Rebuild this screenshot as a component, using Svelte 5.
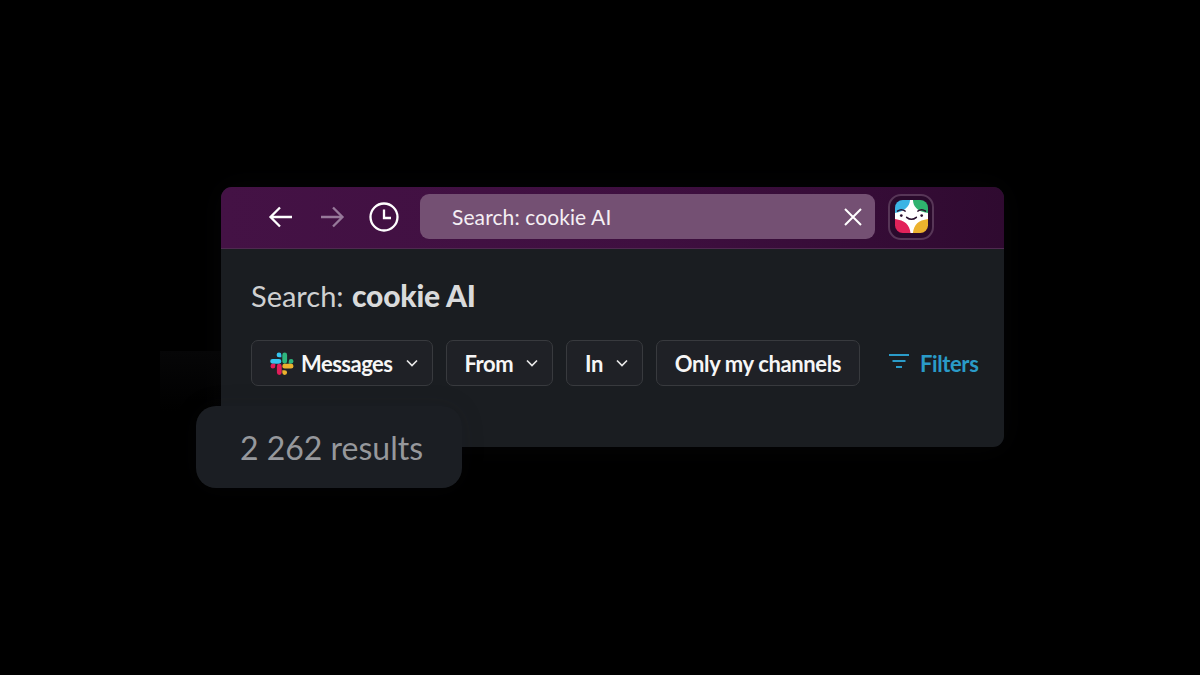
<script>
  const chips = [
    { label: 'Messages', logo: true, chevron: true },
    { label: 'From', chevron: true },
    { label: 'In', chevron: true },
    { label: 'Only my channels' }
  ];
</script>

<main class="page">
  <section class="window">
    <div class="ghost"></div>
    <header class="topbar">
      <svg class="nav back" viewBox="0 0 26 26" aria-hidden="true"><path d="M24 13H2.5M12 3.5 2.5 13l9.500 9.500" /></svg>
      <svg class="nav forward" viewBox="0 0 26 26" aria-hidden="true"><path d="M2 13h21.500M14 3.500l9.500 9.500-9.500 9.500" /></svg>
      <svg class="clock" viewBox="0 0 30 30" aria-hidden="true"><circle cx="15" cy="15" r="13.500" /><path d="M15 7.500V16h7" /></svg>
      <div class="search">
        <span>Search: cookie AI</span>
        <svg class="close" viewBox="0 0 20 20" aria-hidden="true"><path d="M2 2l16 16M18 2 2 18" /></svg>
      </div>
      <div class="avatar">
        <svg viewBox="0 0 34 34" aria-hidden="true">
          <defs><clipPath id="sq"><rect width="34" height="34" rx="8" /></clipPath></defs>
          <g clip-path="url(#sq)">
            <rect width="17" height="17" fill="#3bb4e5" />
            <rect x="17" width="17" height="17" fill="#2fb36f" />
            <rect y="17" width="17" height="17" fill="#e2225a" />
            <rect x="17" y="17" width="17" height="17" fill="#ecb22e" />
            <path d="M15.500 0h3c.5 7 4 11.500 15.500 13.500V19.500C24 21 19.500 25 18.500 34h-2.500C15 25 10 21 0 19.500V13.500C10 11.500 15 7 15.500 0Z" fill="#fff" />
            <path d="M2.500 11.500c2.500-1.800 5.500-1.800 8 0M23.500 11.500c2.500-1.800 5.500-1.800 8 0" fill="none" stroke="#2b1230" stroke-width="1.400" stroke-linecap="round" />
            <path d="M12 17.800c3.200 2.600 6.800 2.600 10 0" fill="none" stroke="#2b1230" stroke-width="1.600" stroke-linecap="round" />
            <circle cx="6.500" cy="16" r="1.400" fill="#2b1230" />
            <circle cx="27.500" cy="16" r="1.400" fill="#2b1230" />
          </g>
        </svg>
      </div>
    </header>

    <div class="content">
      <h1>Search: <strong>cookie AI</strong></h1>
      <div class="filters">
        {#each chips as chip}
          <button class="chip" class:plain={!chip.chevron}>
            {#if chip.logo}
              <svg class="slack" viewBox="0 0 24 24" aria-hidden="true">
                <path fill="#36c5f0" d="M9 1a2.400 2.400 0 0 0 0 4.800h2.400V3.400A2.400 2.400 0 0 0 9 1ZM9 7.400H2.600a2.400 2.400 0 0 0 0 4.800H9a2.400 2.400 0 0 0 0-4.800Z" />
                <path fill="#2eb67d" d="M23.500 9.800a2.400 2.400 0 0 0-4.800 0v2.400h2.400a2.400 2.400 0 0 0 2.400-2.400ZM17.100 9.800V3.400a2.400 2.400 0 0 0-4.800 0v6.400a2.400 2.400 0 0 0 4.800 0Z" />
                <path fill="#ecb22e" d="M14.700 23.500a2.400 2.400 0 0 0 0-4.800h-2.400v2.400a2.400 2.400 0 0 0 2.400 2.400ZM14.700 17.100h6.400a2.400 2.400 0 0 0 0-4.800h-6.400a2.400 2.400 0 0 0 0 4.800Z" />
                <path fill="#e01e5a" d="M.5 14.700a2.400 2.400 0 0 0 4.800 0v-2.400H2.900a2.400 2.400 0 0 0-2.400 2.400ZM6.900 14.700v6.400a2.400 2.400 0 0 0 4.800 0v-6.400a2.400 2.400 0 0 0-4.800 0Z" />
              </svg>
            {/if}
            <span>{chip.label}</span>
            {#if chip.chevron}
              <svg class="chev" viewBox="0 0 12 8" aria-hidden="true"><path d="M1 1.500 6 6.500l5-5" /></svg>
            {/if}
          </button>
        {/each}
        <div class="more">
          <svg viewBox="0 0 22 16" aria-hidden="true"><path d="M1 2h20M4.500 8h13M8 14h6" /></svg>
          <span>Filters</span>
        </div>
      </div>
    </div>
    <div class="results">2 262 results</div>
  </section>
</main>

<style>
  :global(body) { margin: 0; background: #000; }
  .page {
    width: 1200px;
    height: 675px;
    padding: 187px 196px 0 221px;
    box-sizing: border-box;
    background: #000;
    overflow: hidden;
    font-family: Lato, "Liberation Sans", sans-serif;
  }
  .window {
    position: relative;
    width: 783px;
    height: 260px;
    border-radius: 11px;
    background: #1a1d21;
    box-shadow: 0 0 30px rgba(35, 38, 44, 0.16);
  }
  .ghost {
    position: absolute;
    left: -61px;
    top: 164px;
    width: 61px;
    height: 60px;
    background: linear-gradient(180deg, #060607, rgba(2, 2, 2, 0));
  }
  .topbar {
    height: 62px;
    box-sizing: border-box;
    padding: 7px 0 9px 47px;
    display: flex;
    align-items: center;
    border-bottom: 1px solid #4f2a50;
    border-radius: 11px 11px 0 0;
    background: linear-gradient(90deg, #441245 0%, #3f0f40 55%, #2f0a30 100%);
  }
  .nav { width: 26px; height: 26px; fill: none; stroke-width: 2.300; flex: none; }
  .back { stroke: #fff; }
  .forward { stroke: #97799a; margin-left: 25px; }
  .clock {
    width: 30px;
    height: 30px;
    margin-left: 24px;
    flex: none;
    fill: none;
    stroke: #fff;
    stroke-width: 2.300;
  }
  .search {
    width: 455px;
    height: 45px;
    margin-left: 21px;
    padding: 0 12px 0 32px;
    box-sizing: border-box;
    display: flex;
    align-items: center;
    justify-content: space-between;
    border-radius: 9px;
    background: #745073;
    color: #f4eff4;
    font-size: 21px;
    letter-spacing: 0.1px;
  }
  .close { width: 20px; height: 20px; fill: none; stroke: #fff; stroke-width: 2; }
  .avatar {
    width: 46px;
    height: 46px;
    margin-left: 13px;
    box-sizing: border-box;
    display: flex;
    align-items: center;
    justify-content: center;
    border: 2px solid #573657;
    border-radius: 13px;
    background: #2a0a2c;
  }
  .avatar svg { width: 33px; height: 33px; }
  .content { padding: 29px 25px 0 30px; }
  h1 {
    margin: 0;
    height: 35px;
    color: #cfd0d1;
    font-size: 29px;
    line-height: 35px;
    font-weight: 400;
  }
  h1 strong { margin-left: 1px; font-weight: 900; font-size: 30px; letter-spacing: -0.2px; color: #d9dadb; }
  .filters { display: flex; align-items: center; margin-top: 27px; gap: 13px; }
  .chip {
    height: 46px;
    padding: 0 14px 0 18px;
    display: flex;
    flex: none;
    align-items: center;
    box-sizing: border-box;
    border: 1px solid #383a3e;
    border-radius: 7px;
    background: #1f2126;
    color: #f6f6f6;
    white-space: nowrap;
    font: 700 22px Lato, "Liberation Sans", sans-serif;
  }
  .chip span { letter-spacing: -0.5px; padding-top: 1px; }
  .chip.plain { padding: 0 18px; }
  .chip.plain span { letter-spacing: -0.38px; }
  .slack { width: 24px; height: 25px; margin-right: 7px; flex: none; }
  .chev {
    width: 12px;
    height: 8px;
    margin-left: 13px;
    flex: none;
    fill: none;
    stroke: #e8e8e8;
    stroke-width: 1.700;
  }
  .more {
    margin-left: 15px;
    display: flex;
    align-items: center;
    color: #2a9bc8;
    font-size: 22px;
    font-weight: 700;
    letter-spacing: -0.4px;
    white-space: nowrap;
  }
  .more svg {
    width: 22px;
    height: 16px;
    margin-right: 10px;
    margin-bottom: 4px;
    fill: none;
    stroke: #2a9bc8;
    stroke-width: 2;
  }
  .results {
    position: absolute;
    left: -25px;
    top: 219px;
    width: 266px;
    height: 82px;
    padding-left: 5px;
    box-sizing: border-box;
    display: flex;
    align-items: center;
    justify-content: center;
    border-radius: 20px;
    background: #1b1e23;
    color: #96989c;
    font-size: 32px;
    box-shadow: 0 0 24px rgba(30, 33, 38, 0.12);
  }
</style>
